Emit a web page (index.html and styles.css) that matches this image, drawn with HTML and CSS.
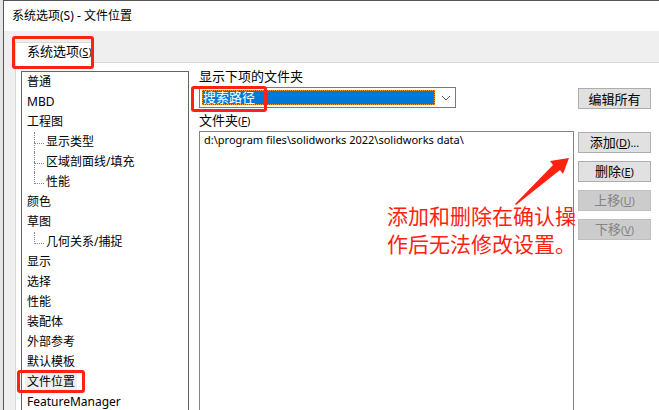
FILE: index.html
```
<!DOCTYPE html>
<html lang="zh-CN">
<head>
<meta charset="utf-8">
<title>系统选项(S) - 文件位置</title>
<link rel="stylesheet" href="styles.css">
</head>
<body>
<main class="dialog">
  <header class="titlebar">系统选项(S) - 文件位置</header>
  <nav class="tabs">
    <button class="tab marked" type="button">系统选项<small>(<u>S</u>)</small></button>
  </nav>
  <div class="pane">
    <ul class="tree">
      <li>普通</li>
      <li>MBD</li>
      <li>工程图
        <ul>
          <li>显示类型</li>
          <li>区域剖面线/填充</li>
          <li>性能</li>
        </ul>
      </li>
      <li>颜色</li>
      <li>草图
        <ul>
          <li>几何关系/捕捉</li>
        </ul>
      </li>
      <li>显示</li>
      <li>选择</li>
      <li>性能</li>
      <li>装配体</li>
      <li>外部参考</li>
      <li>默认模板</li>
      <li><span class="selected marked">文件位置</span></li>
      <li>FeatureManager</li>
    </ul>
    <section class="settings">
      <div class="fields">
        <label class="label" for="kind">显示下项的文件夹</label>
        <div class="combo marked">
          <select id="kind"><option>搜索路径</option></select>
          <svg class="chevron" viewBox="0 0 10 6" aria-hidden="true"><path d="M1 1l4 4 4-4"/></svg>
        </div>
        <div class="label" id="folders-label">文件夹<small>(<u>F</u>)</small></div>
        <div class="folders" role="listbox" aria-labelledby="folders-label">
          <div role="option">d:\program files\solidworks 2022\solidworks data\</div>
          <svg class="arrow" viewBox="0 0 56 50" aria-hidden="true"><path d="M1 47L39 8 36 4 55 1 49 17 46 13 2 48z"/></svg>
          <p class="note">添加和删除在确认操<br>作后无法修改设置。</p>
        </div>
      </div>
      <div class="actions">
        <button class="first" type="button">编辑所有</button>
        <button type="button">添加<small>(<u>D</u>)...</small></button>
        <button type="button">删除<small>(<u>E</u>)</small></button>
        <button type="button" disabled>上移<small>(<u>U</u>)</small></button>
        <button type="button" disabled>下移<small>(<u>V</u>)</small></button>
      </div>
    </section>
  </div>
</main>
</body>
</html>
```
FILE: styles.css
```
*, *::before, *::after { box-sizing: border-box; }

body {
  margin: 0;
  padding-left: 3px;
  height: 100vh;
  overflow: hidden;
  background: #e6e6e6;
  color: #000;
  font: 12px/20px "Noto Sans", "Noto Sans CJK SC", sans-serif;
}

button, select { font: inherit; color: inherit; }
small { font-size: 11px; }
u { text-underline-offset: 1px; }

.dialog {
  display: flex;
  flex-direction: column;
  height: 100%;
  border: solid #555;
  border-width: 1px 0 0 1px;
  background: #efefef;
}

.titlebar {
  height: 30px;
  padding: 5px 8px;
  background: #fff;
}

.tabs {
  display: flex;
  padding: 11px 0 0 11px;
}

.tab {
  height: 21px;
  margin-bottom: -1px;
  padding: 0 1px 4px 11px;
  border: 1px solid #d9d9d9;
  border-bottom: 0;
  background: #fff;
  font-size: 13px;
  line-height: 16px;
  white-space: nowrap;
}

.pane {
  flex: 1;
  min-height: 0;
  display: flex;
  gap: 10px;
  margin-left: 11px;
  padding: 8px 8px 0 5px;
  border: solid #d9d9d9;
  border-width: 1px 0 0 1px;
  background: #fff;
}

.tree {
  flex: 0 0 168px;
  margin: 0;
  padding: 0 5px;
  border: 1px solid #646464;
  border-bottom: 0;
  list-style: none;
}

.tree ul {
  margin: 0 0 0 7px;
  padding: 0;
  list-style: none;
}

.tree ul li {
  position: relative;
  padding-left: 12px;
}

.tree ul li::before {
  content: "";
  position: absolute;
  left: 0;
  top: 0;
  width: 10px;
  height: 12px;
  border: dotted #888;
  border-width: 0 0 1px 1px;
}

.tree ul li:not(:last-child)::after {
  content: "";
  position: absolute;
  left: 0;
  top: 10px;
  height: 10px;
  border-left: 1px dotted #888;
}

.selected {
  display: inline-block;
  height: 17px;
  margin-left: -2px;
  padding: 0 2px;
  background: #efefef;
  line-height: 17px;
}

.settings {
  flex: 1;
  min-width: 0;
  display: flex;
  gap: 4px;
}

.fields {
  flex: 1;
  min-width: 0;
  display: flex;
  flex-direction: column;
}

.label {
  height: 16px;
  font-size: 13px;
  line-height: 10px;
}

.combo {
  display: flex;
  align-items: center;
  width: 257px;
  height: 21px;
  margin-bottom: 7px;
  padding: 2px;
  border: 1px solid #7a7a7a;
}

.combo select {
  flex: 1;
  height: 15px;
  padding: 0;
  border: 1px dotted #ff9a32;
  border-radius: 0;
  background: #0078d7;
  color: #fff;
  font-size: 13px;
  line-height: 13px;
  appearance: none;
}

.chevron {
  width: 10px;
  height: 6px;
  margin: 0 2px 0 6px;
  fill: none;
  stroke: #555;
}

.folders {
  flex: 1;
  position: relative;
  border: 1px solid #828287;
  border-bottom: 0;
  padding-left: 4px;
  font-size: 11px;
  line-height: 16px;
  white-space: nowrap;
}

.actions {
  flex: 0 0 73px;
  display: flex;
  flex-direction: column;
  gap: 8px;
  padding-top: 17px;
}

.actions button {
  height: 21px;
  padding: 0;
  border: 1px solid #adadad;
  background: #e1e1e1;
  font-size: 13px;
  line-height: 16px;
}

.actions .first { margin-bottom: 15px; }

.actions button:disabled {
  border-color: #bfbfbf;
  background: #ccc;
  color: #838383;
}

/* Red call-outs drawn over the dialog */
.marked { position: relative; }

.marked::before {
  content: "";
  position: absolute;
  z-index: 1;
  border: 3px solid #ff2213;
  border-radius: 3px;
}

.tab.marked::before { inset: -7px -1px -6px -4px; }
.combo.marked::before { left: -9px; top: -2px; width: 76px; height: 26px; }
.selected.marked::before { inset: -3px -8px -3px -8px; }

.arrow {
  position: absolute;
  right: 3px;
  top: 25px;
  width: 56px;
  height: 50px;
  fill: #ff2213;
}

.note {
  position: absolute;
  right: -3px;
  top: 70px;
  margin: 0;
  color: #ff2213;
  font-size: 21px;
  line-height: 28px;
}
```
